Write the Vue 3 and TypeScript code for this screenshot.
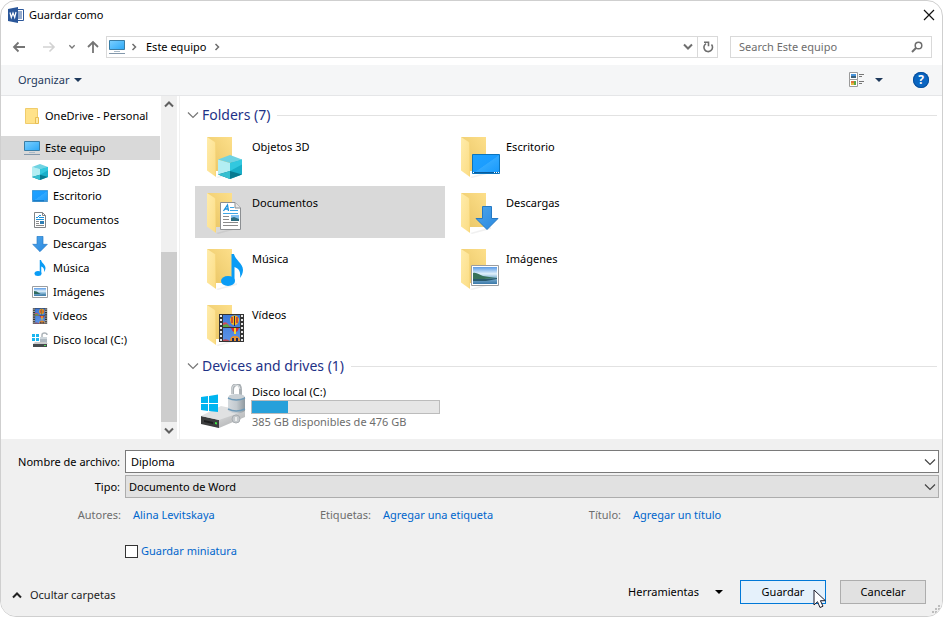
<script setup lang="ts">
import { ref } from 'vue'

interface Place {
  name: string
  icon: string
}

interface FolderTile extends Place {
  x: number
  y: number
  w: number
  h: number
}

const places: Place[] = [
  { name: 'Objetos 3D', icon: 'cube' },
  { name: 'Escritorio', icon: 'desktop' },
  { name: 'Documentos', icon: 'document' },
  { name: 'Descargas', icon: 'download' },
  { name: 'Música', icon: 'music' },
  { name: 'Imágenes', icon: 'picture' },
  { name: 'Vídeos', icon: 'video' },
  { name: 'Disco local (C:)', icon: 'drive' },
]

const folders: FolderTile[] = [
  { name: 'Objetos 3D', icon: 'cube', x: 17, y: 23, w: 24, h: 24 },
  { name: 'Escritorio', icon: 'desktop', x: 17, y: 22, w: 28, h: 20 },
  { name: 'Documentos', icon: 'document', x: 19, y: 14, w: 21, h: 28 },
  { name: 'Descargas', icon: 'download', x: 20, y: 18, w: 24, h: 24 },
  { name: 'Música', icon: 'music', x: 20, y: 10, w: 22, h: 32 },
  { name: 'Imágenes', icon: 'picture', x: 16, y: 21, w: 28, h: 21 },
  { name: 'Vídeos', icon: 'video', x: 18, y: 14, w: 25, h: 28 },
]

const metadata = [
  { label: 'Autores:', action: 'Alina Levitskaya' },
  { label: 'Etiquetas:', action: 'Agregar una etiqueta' },
  { label: 'Título:', action: 'Agregar un título' },
]

const selectedFolder = ref('Documentos')
const fileName = ref('Diploma')
const fileType = ref('Documento de Word')
const saveThumbnail = ref(false)
const totalGb = 476
const freeGb = 385
const usedPercent = Math.round(((totalGb - freeGb) / totalGb) * 100)
</script>

<template>
  <svg class="sprite" width="0" height="0" aria-hidden="true">
    <defs>
      <linearGradient id="g-flap" x1="0" y1="0" x2="1" y2="1">
        <stop offset="0" stop-color="#ffecab" /><stop offset="1" stop-color="#fbdc83" />
      </linearGradient>
      <linearGradient id="g-back" x1="0" y1="1" x2="1" y2="0">
        <stop offset="0" stop-color="#e8c463" /><stop offset="1" stop-color="#fddf8a" />
      </linearGradient>
      <linearGradient id="g-screen" x1="0" y1="0" x2="1" y2="1">
        <stop offset="0" stop-color="#1fa2ff" /><stop offset=".5" stop-color="#1b9dff" />
        <stop offset=".52" stop-color="#31a9ff" /><stop offset="1" stop-color="#1698fb" />
      </linearGradient>
      <linearGradient id="g-pc" x1="0" y1="0" x2="1" y2="1">
        <stop offset="0" stop-color="#7cd0ff" /><stop offset="1" stop-color="#2ba8f7" />
      </linearGradient>
      <linearGradient id="g-arrow" x1="0" y1="0" x2="1" y2="1">
        <stop offset="0" stop-color="#4ea5ea" /><stop offset="1" stop-color="#2888e0" />
      </linearGradient>
      <linearGradient id="g-sky" x1="0" y1="0" x2="0" y2="1">
        <stop offset="0" stop-color="#5a9be6" /><stop offset=".4" stop-color="#e2f1fb" />
        <stop offset=".6" stop-color="#8fbcda" /><stop offset="1" stop-color="#3a78a8" />
      </linearGradient>
      <linearGradient id="g-film" x1="0" y1="0" x2="0" y2="1">
        <stop offset="0" stop-color="#3c78d8" /><stop offset="1" stop-color="#5b93e6" />
      </linearGradient>
      <linearGradient id="g-metal" x1="0" y1="0" x2="1" y2="0">
        <stop offset="0" stop-color="#d5dade" /><stop offset=".5" stop-color="#c3cacf" /><stop offset="1" stop-color="#8f999f" />
      </linearGradient>
      <linearGradient id="g-case" x1="0" y1="0" x2="1" y2="1">
        <stop offset="0" stop-color="#f0f0f0" /><stop offset="1" stop-color="#a9abad" />
      </linearGradient>
    </defs>
    <symbol id="i-folder" viewBox="0 0 48 48">
      <path d="M15 45l21-6v2l-19 5z" fill="#000" opacity=".06" />
      <path d="M6 5h25v34H15z" fill="url(#g-back)" />
      <path d="M6 5l7 4.500q2 1.300 2 3.500v32l-9-6.500z" fill="url(#g-flap)" />
      <path d="M14.500 11v33" stroke="#f7d77c" />
    </symbol>
    <symbol id="i-cube" viewBox="0 0 24 24">
      <path d="M0 4.500L12 8v16L0 19.500z" fill="#b3eef3" />
      <path d="M0 4.500L12 0l12 4.500L12 8z" fill="#6fd3e2" />
      <path d="M12 8l12-3.500v15L12 24z" fill="#19afc9" />
      <path d="M12 8l12-3.500v5L12 16z" fill="#32c8df" />
      <path d="M0 19.500L12 16l12 3.500L12 24z" fill="#087b91" />
      <path d="M0 19.500L12 16v8z" fill="#35bfd0" />
    </symbol>
    <symbol id="i-desktop" viewBox="0 0 28 20">
      <path d="M.5.5h27v19H.5z" fill="url(#g-screen)" stroke="#0b74bd" />
      <path d="M1 18h26v1H1z" fill="#075a9b" />
      <path d="M1 18h1v1H1zM22 18h1v1h-1zM24 18h1v1h-1zM26 18h1v1h-1z" fill="#fff" />
    </symbol>
    <symbol id="i-document" viewBox="0 0 21 28">
      <path d="M.5.5h14.500l5.500 5.500v21.500H.5z" fill="#fff" stroke="#8c8f92" />
      <path d="M15 .5V6h5.500" fill="#e7e7e7" stroke="#8c8f92" />
      <path d="M3.500 9L7.500 3l1 6M5 7h3.500" fill="none" stroke="#1a91dc" stroke-width="1.300" />
      <path d="M10 5.500h4M10 8.500h8M3 11.500h15" stroke="#3ea6e6" />
      <path d="M3 14.500h6M3 17.500h6M3 20.500h15M3 23.500h15" stroke="#8b8b8b" />
      <path d="M11 13h8v6h-8z" fill="#85c2f1" />
      <path d="M11 16l3-1 5 2v2h-8z" fill="#2c6c80" />
    </symbol>
    <symbol id="i-document-small" viewBox="0 0 16 16">
      <path d="M2.500.5h8l3 3v12h-11z" fill="#fff" stroke="#808386" />
      <path d="M10.500.5v3h3" fill="none" stroke="#808386" />
      <path d="M4 5.500h2M7 3.500h2M6 4.500h1M7 5.500h5M4 7.500h8" stroke="#1a91dc" />
      <path d="M4 9.500h3M4 11.500h3M4 13.500h8" stroke="#8b8b8b" />
      <path d="M8 9h4v3H8z" fill="#2f7fb5" />
    </symbol>
    <symbol id="i-download" viewBox="0 0 24 24">
      <path d="M7.500.5h9v12h6.500L12 23.500 1 12.500h6.500z" fill="url(#g-arrow)" stroke="#2479c4" />
    </symbol>
    <symbol id="i-music" viewBox="0 0 22 32">
      <ellipse cx="7" cy="27" rx="7" ry="5" fill="#0a9cf5" />
      <path d="M10.500 0H13c1 6 9 9 9 16 0 3-1.500 6-3 8 1-6-1-9.500-5.500-11v14h-3z" fill="#0a9cf5" />
    </symbol>
    <symbol id="i-picture" viewBox="0 0 28 21">
      <path d="M.5.5h27v20H.5z" fill="#fff" stroke="#9a9da0" />
      <path d="M2 2h24v17H2z" fill="url(#g-sky)" />
      <path d="M2 8c4-1 6 2 10 3s8 1 14 2l-13 1H2z" fill="#387259" />
      <path d="M2 14h13l11-1v1l-11 2H2z" fill="#28596c" />
    </symbol>
    <symbol id="i-picture-small" viewBox="0 0 16 16">
      <path d="M.5 2.500h15v11H.5z" fill="#fff" stroke="#9a9da0" />
      <path d="M2 4h12v8H2z" fill="url(#g-sky)" />
      <path d="M2 7q3 0 5 2t7 1H2z" fill="#2f6b5f" />
    </symbol>
    <symbol id="i-video" viewBox="0 0 25 28">
      <path d="M0 0h25v28H0z" fill="#343434" />
      <path d="M4 1h17v12H4zM4 14h17v13H4z" fill="url(#g-film)" />
      <path d="M2 1v27M23 1v27" stroke="#e8e8e8" stroke-width="2" stroke-dasharray="2 2" />
      <path d="M4 9q3-2 5 1t4 3H4z" fill="#d1495e" />
      <path d="M4 11l4-1 3 3H4z" fill="#58a64b" />
      <path d="M11 6a4.500 4.500 0 0 1 9 0q0 3-3 5h-3q-3-2-3-5z" fill="#f6b71d" />
      <path d="M13 3v6M18 3v6" stroke="#c13236" stroke-width="1.500" />
      <path d="M15.500 2v10" stroke="#282a4d" />
      <path d="M12 14h8q-1 3-3 4h-2q-2-1-3-4z" fill="#d82d31" />
      <path d="M15 14h2v6h-2z" fill="#f7d52b" />
      <path d="M11 27q0-5 5-5t5 5z" fill="#e8902a" />
      <path d="M13 24h2v3h-2zM17 24h2v3h-2z" fill="#212a59" />
      <path d="M4 26q3-2 7 1H4z" fill="#b64a54" />
    </symbol>
    <symbol id="i-drive" viewBox="0 0 16 16">
      <path d="M0 2h3v3H0zM4 2h3v3H4zM0 6h3v3H0zM4 6h3v3H4z" fill="#19b5ef" />
      <path d="M10 6V3q0-2 2.500-2T15 3" fill="none" stroke="#adb4b9" stroke-width="1.500" />
      <path d="M8 5h7v6H8z" fill="#aeb9c1" />
      <path d="M8 6h7" stroke="#ecf2f5" />
      <path d="M3 10h11l2 2H1z" fill="#c9cbcd" />
      <path d="M1 12h14v3H1z" fill="#464a4d" />
      <path d="M12 13h2v1h-2z" fill="#51dd5a" />
    </symbol>
    <symbol id="i-pc" viewBox="0 0 16 16">
      <path d="M.5 1.500h15v9H.5z" fill="url(#g-pc)" stroke="#397da5" />
      <path d="M5 12h6v1H5z" fill="#a9bac8" />
      <path d="M0 14.500h16" stroke="#8398ab" />
    </symbol>
    <symbol id="i-chevron" viewBox="0 0 12 12">
      <path d="M1 3.500l5 5 5-5" fill="none" stroke="currentColor" stroke-width="1.200" />
    </symbol>
    <symbol id="i-chevron-bold" viewBox="0 0 12 12">
      <path d="M2 3.500l4 4 4-4" fill="none" stroke="currentColor" stroke-width="2" />
    </symbol>
    <symbol id="i-chevron-small" viewBox="0 0 8 8">
      <path d="M2.500 1l3 3-3 3" fill="none" stroke="currentColor" stroke-width="1.500" />
    </symbol>
    <symbol id="i-caret" viewBox="0 0 8 8">
      <path d="M0 2h8L4 6z" fill="currentColor" />
    </symbol>
  </svg>

  <main class="dialog">
    <header class="title-bar">
      <svg class="icon-16" viewBox="0 0 16 16" aria-hidden="true">
        <path d="M8.500 2.500h7v11h-7z" fill="#fff" stroke="#2b579a" />
        <path d="M10 5h4M10 7h4M10 9h4M10 11h4" stroke="#2b579a" />
        <path d="M0 2l10-2v16L0 14z" fill="#2b579a" />
        <path d="M2 5.500l1.300 5L5 6l1.700 4.500L8 5" fill="none" stroke="#fff" stroke-width="1.200" />
      </svg>
      <h1>Guardar como</h1>
      <button class="close" aria-label="Cerrar">
        <svg width="12" height="12" viewBox="0 0 12 12"><path d="M1 1l10 10M11 1L1 11" stroke="#111" stroke-width="1.200" /></svg>
      </button>
    </header>

    <div class="address-row">
      <div class="history">
        <button aria-label="Atrás">
          <svg width="14" height="14" viewBox="0 0 14 14"><path d="M13 7H2M6.500 2.500L2 7l4.500 4.500" fill="none" stroke="#757575" stroke-width="1.800" /></svg>
        </button>
        <button aria-label="Adelante" disabled>
          <svg width="14" height="14" viewBox="0 0 14 14"><path d="M1 7h11M7.500 2.500L12 7l-4.500 4.500" fill="none" stroke="#d2d2d2" stroke-width="1.600" /></svg>
        </button>
        <button class="recent" aria-label="Ubicaciones recientes">
          <svg width="8" height="8"><use href="#i-chevron-bold" /></svg>
        </button>
        <button aria-label="Subir">
          <svg width="14" height="14" viewBox="0 0 14 14"><path d="M7 13V2M2 7l5-5 5 5" fill="none" stroke="#757575" stroke-width="1.800" /></svg>
        </button>
      </div>
      <div class="address">
        <svg class="icon-16" aria-hidden="true"><use href="#i-pc" /></svg>
        <svg class="crumb-arrow" width="8" height="8" aria-hidden="true"><use href="#i-chevron-small" /></svg>
        <button class="crumb">Este equipo</button>
        <svg class="crumb-arrow" width="8" height="8" aria-hidden="true"><use href="#i-chevron-small" /></svg>
        <button class="address-drop" aria-label="Ubicaciones anteriores">
          <svg width="12" height="12"><use href="#i-chevron-bold" /></svg>
        </button>
        <button class="refresh" aria-label="Actualizar">
          <svg width="12" height="12" viewBox="0 0 12 12">
            <path d="M9.500 3.500A4.300 4.300 0 1 1 4 2.600" fill="none" stroke="#6e6e6e" stroke-width="1.600" />
            <path d="M2 1.300h4.500v4" fill="none" stroke="#6e6e6e" stroke-width="1.600" />
          </svg>
        </button>
      </div>
      <div class="search">
        <input type="search" placeholder="Search Este equipo" aria-label="Search Este equipo" />
        <svg width="12" height="12" viewBox="0 0 12 12" aria-hidden="true">
          <circle cx="7.500" cy="4.500" r="3.300" fill="none" stroke="#6e6e6e" stroke-width="1.500" />
          <path d="M5 7l-4 4" stroke="#6e6e6e" stroke-width="2" />
        </svg>
      </div>
    </div>

    <div class="toolbar">
      <button class="organize">Organizar <svg width="8" height="8" aria-hidden="true"><use href="#i-caret" /></svg></button>
      <button class="view" aria-label="Cambiar la vista">
        <svg class="icon-16" viewBox="0 0 16 16">
          <path d="M.5.5h8v7h-8zM.5 7.500h8v7h-8z" fill="#fff" stroke="#9a9a9a" />
          <path d="M2 2h5v2H2z" fill="#4793da" /><path d="M2 4h5v2H2z" fill="#3b5f78" />
          <path d="M2 9h3v2H2z" fill="#df763d" /><path d="M5 9h2v4H5z" fill="#5aa846" /><path d="M2 11h3v2H2z" fill="#e4b83a" />
          <path d="M10 2.500h5M10 4.500h3M10 9.500h5M10 11.500h3" stroke="#777" />
        </svg>
        <svg width="8" height="8"><use href="#i-caret" /></svg>
      </button>
      <button class="help" aria-label="Ayuda">?</button>
    </div>

    <div class="browser">
      <nav class="sidebar" aria-label="Ubicaciones">
        <div class="tree">
          <a class="place cloud" href="#onedrive">
            <svg class="icon-16" viewBox="0 0 16 16" aria-hidden="true">
              <path d="M1.500.5h12v15h-12z" fill="#ffe289" stroke="#f0cc6b" />
              <path d="M11.500 9.500h3v6h-3z" fill="#ffe9a6" stroke="#e9be51" />
            </svg>
            OneDrive - Personal
          </a>
          <a class="place current" href="#equipo" aria-current="true">
            <svg class="icon-16" aria-hidden="true"><use href="#i-pc" /></svg>
            Este equipo
          </a>
          <a v-for="place in places" :key="place.name" class="place child" :href="'#' + place.icon">
            <svg class="icon-16" aria-hidden="true">
              <use :href="'#i-' + place.icon + (place.icon === 'document' || place.icon === 'picture' ? '-small' : '')" />
            </svg>
            {{ place.name }}
          </a>
        </div>
        <div class="scrollbar" aria-hidden="true">
          <svg class="flip" width="12" height="12"><use href="#i-chevron-bold" /></svg>
          <div class="track"><div class="thumb"></div></div>
          <svg width="12" height="12"><use href="#i-chevron-bold" /></svg>
        </div>
      </nav>

      <section class="content">
        <h2><svg width="12" height="12" aria-hidden="true"><use href="#i-chevron" /></svg>Folders (7)</h2>
        <div class="tiles">
          <button
            v-for="folder in folders"
            :key="folder.name"
            class="tile"
            :class="{ selected: folder.name === selectedFolder }"
            @click="selectedFolder = folder.name"
          >
            <svg width="48" height="48" viewBox="0 0 48 48" aria-hidden="true">
              <use href="#i-folder" width="48" height="48" />
              <use :href="'#i-' + folder.icon" :x="folder.x" :y="folder.y" :width="folder.w" :height="folder.h" />
            </svg>
            <span class="tile-name">{{ folder.name }}</span>
          </button>
        </div>
        <h2><svg width="12" height="12" aria-hidden="true"><use href="#i-chevron" /></svg>Devices and drives (1)</h2>
        <button class="tile drive">
          <svg width="48" height="48" viewBox="0 0 48 48" aria-hidden="true">
            <path d="M0 33l18-9 26 1v8L18 44 0 39z" fill="url(#g-case)" />
            <path d="M0 32l18 4v8L0 40z" fill="#3c3d3e" />
            <path d="M0 32l18 4 26-9-24-5z" fill="#e0e1e2" />
            <path d="M3 36l9 2v2l-9-2z" fill="#1d1e1f" />
            <path d="M14 38l2 .5v2l-2-.5z" fill="#3bea44" />
            <path d="M0 13l7-1v7H0zM8 12l9-1.500V19H8zM0 20h7v7l-7-1zM8 20h9v8l-9-1z" fill="#00b5f0" />
            <path d="M31.500 10V6q0-5 4-5.500t4 5.500v11" fill="none" stroke="#aab0b4" stroke-width="3" />
            <path d="M31 10V6q0-5 4-5t4 4" fill="none" stroke="#dfe3e5" />
            <path d="M27 13q8-4 17 0v14q-8 5-17 0z" fill="url(#g-metal)" />
            <path d="M27 14q8 4 17 0M27 25q8 4 17 0" fill="none" stroke="#6e9ab8" stroke-width="1.500" />
            <ellipse cx="35.500" cy="12.500" rx="8" ry="2.500" fill="#c9d0d5" />
            <circle cx="35" cy="35" r="4" fill="#c5c9cc" stroke="#a8adb1" />
            <path d="M35 33v4" stroke="#f4f4f4" stroke-width="1.500" />
          </svg>
          <span class="drive-info">
            <span class="drive-name">Disco local (C:)</span>
            <span class="capacity"><span class="used" :style="{ width: usedPercent + '%' }"></span></span>
            <span class="drive-name free">{{ freeGb }} GB disponibles de {{ totalGb }} GB</span>
          </span>
        </button>
      </section>
    </div>

    <form class="details" @submit.prevent>
      <div class="field">
        <label for="file-name">Nombre de archivo:</label>
        <div class="box">
          <input id="file-name" v-model="fileName" type="text" />
          <svg width="12" height="12" aria-hidden="true"><use href="#i-chevron" /></svg>
        </div>
      </div>
      <div class="field">
        <label for="file-type">Tipo:</label>
        <div class="box type">
          <select id="file-type" v-model="fileType">
            <option>Documento de Word</option>
          </select>
          <svg width="12" height="12" aria-hidden="true"><use href="#i-chevron" /></svg>
        </div>
      </div>
      <dl class="metadata">
        <div v-for="item in metadata" :key="item.label">
          <dt>{{ item.label }}</dt>
          <dd><a href="#detalle">{{ item.action }}</a></dd>
        </div>
      </dl>
      <label class="thumbnail"><input v-model="saveThumbnail" type="checkbox" />Guardar miniatura</label>
      <footer>
        <button class="hide-folders" type="button">
          <svg class="flip" width="12" height="12" aria-hidden="true"><use href="#i-chevron-bold" /></svg>Ocultar carpetas
        </button>
        <button class="tools" type="button">Herramientas <svg width="8" height="8" aria-hidden="true"><use href="#i-caret" /></svg></button>
        <button class="action primary" type="submit">
          Guardar
          <svg class="pointer" width="14" height="20" viewBox="0 0 14 20" aria-hidden="true">
            <path d="M1 1v15l3.500-3.300L7 18.500l3-1.300-2.600-5.500h5z" fill="#fff" stroke="#1b1b2b" />
          </svg>
        </button>
        <button class="action" type="button">Cancelar</button>
      </footer>
      <svg class="grip" width="12" height="12" viewBox="0 0 12 12" aria-hidden="true">
        <path d="M8 1h2v2H8zM8 4h2v2H8zM5 4h2v2H5zM5 7h2v2H5zM2 7h2v2H2zM8 7h1v1H8z" fill="#bdbdbd" />
      </svg>
    </form>
  </main>
</template>

<style>
body {
  background: #fff;
}
</style>

<style scoped>
* {
  box-sizing: border-box;
}
.sprite {
  position: absolute;
}
.dialog {
  display: flex;
  flex-direction: column;
  min-height: 100vh;
  overflow: hidden;
  border: 1px solid #cfcfcf;
  border-radius: 16px;
  background: #fff;
  color: #000;
  font: 11px/16px "Noto Sans", "Open Sans", sans-serif;
}
button,
input,
select {
  padding: 0;
  border: 0;
  outline: 0;
  background: none;
  color: inherit;
  font: inherit;
}
a {
  color: inherit;
  text-decoration: none;
}
svg {
  flex: none;
  display: block;
}
.icon-16 {
  width: 16px;
  height: 16px;
}
.flip {
  transform: rotate(180deg);
}
h1,
h2 {
  margin: 0;
  font-size: 11px;
  font-weight: 400;
}
.title-bar {
  display: flex;
  align-items: center;
  gap: 5px;
  height: 28px;
  padding: 0 7px;
}
.close {
  margin-left: auto;
}
.address-row {
  display: flex;
  align-items: center;
  gap: 12px;
  padding: 7px 10px 7px 11px;
}
.history {
  display: flex;
  align-items: center;
  gap: 16px;
  margin-right: -6px;
  color: #777;
}
.recent {
  margin: 0 -6px 0 -4px;
}
.address,
.search {
  display: flex;
  align-items: center;
  height: 22px;
  border: 1px solid #d9d9d9;
}
.address {
  flex: 1;
  padding-left: 2px;
  color: #6e6e6e;
}
.crumb {
  color: #000;
}
.crumb-arrow {
  margin: 0 8px 0 5px;
}
.crumb + .crumb-arrow {
  margin-left: 7px;
}
.address-drop {
  margin: 0 3px 0 auto;
}
.refresh {
  display: grid;
  place-items: center;
  align-self: stretch;
  width: 20px;
  border-left: 1px solid #d9d9d9;
}
.search {
  width: 202px;
  padding: 0 8px;
}
.search input {
  flex: 1;
  min-width: 0;
  appearance: none;
}
.search input::placeholder {
  color: #6d6d6d;
  opacity: 1;
}
.toolbar {
  display: flex;
  align-items: center;
  height: 31px;
  padding: 0 13px 0 17px;
  border-bottom: 1px solid #e5e6e8;
  background: #f5f6f7;
  color: #1e395b;
}
.organize,
.view,
.tools,
.hide-folders {
  display: flex;
  align-items: center;
}
.organize {
  gap: 5px;
}
.view {
  gap: 10px;
  margin: 0 30px 0 auto;
}
.help {
  width: 16px;
  height: 16px;
  border-radius: 50%;
  background: #0a66c2;
  box-shadow: 0 0 0 1px #0a4f9b inset;
  color: #fff;
  font-size: 12px;
  font-weight: 700;
}
.browser {
  display: flex;
  flex: 1;
}
.sidebar {
  display: flex;
  width: 179px;
  padding-right: 2px;
  border-right: 1px solid #f0f0f0;
  white-space: nowrap;
}
.tree {
  flex: 1;
  padding: 8px 1px 0 0;
}
.place {
  display: flex;
  align-items: center;
  gap: 5px;
  height: 24px;
  padding-left: 23px;
}
.cloud {
  margin-bottom: 8px;
}
.current,
.selected {
  background: #d9d9d9;
}
.child {
  padding-left: 31px;
}
.scrollbar {
  display: flex;
  flex-direction: column;
  align-items: center;
  width: 16px;
  padding: 2px 0;
  background: #f0f0f0;
  color: #606060;
}
.track {
  display: flex;
  flex: 1;
  align-items: flex-end;
  align-self: stretch;
  padding: 3px 0;
}
.thumb {
  flex: 1;
  height: 55%;
  background: #cdcdcd;
}
.content {
  flex: 1;
  padding: 4px 5px 0 7px;
}
h2 {
  display: flex;
  align-items: center;
  gap: 3px;
  height: 30px;
  color: #1e3287;
  font-size: 14px;
}
h2 svg {
  color: #777;
}
h2::after {
  content: "";
  flex: 1;
  height: 1px;
  margin-left: 4px;
  background: #e2e2e2;
}
.tiles {
  display: grid;
  grid-template-columns: repeat(auto-fill, 250px);
  gap: 4px;
  max-width: 510px;
  margin: 0 0 1px 8px;
}
.tile {
  display: flex;
  align-items: flex-start;
  gap: 3px;
  width: 250px;
  height: 52px;
  padding: 2px 0 0 6px;
  text-align: left;
}
.tile-name {
  padding-top: 7px;
}
.drive {
  gap: 2px;
  margin-left: 8px;
  padding-top: 3px;
}
.drive-info {
  display: grid;
  flex: 1;
  margin-right: 5px;
}
.drive-name {
  padding-left: 1px;
}
.capacity {
  height: 14px;
  border: 1px solid #bcbcbc;
  background: #e6e6e6;
}
.used {
  display: block;
  height: 100%;
  background: #26a0da;
}
.free {
  color: #6d6d6d;
}
.details {
  position: relative;
  padding: 11px 3px 12px 0;
  background: #f0f0f0;
}
.field {
  display: flex;
  align-items: center;
  margin-bottom: 2px;
}
.field label {
  width: 124px;
  padding-right: 5px;
  text-align: right;
}
.box {
  display: flex;
  flex: 1;
  align-items: center;
  height: 23px;
  padding: 0 2px 0 5px;
  border: 1px solid #7a7a7a;
  background: #fff;
  color: #444;
}
.box.type {
  padding-left: 3px;
  border-color: #adadad;
  background: #e1e1e1;
}
.box input,
.box select {
  flex: 1;
  align-self: stretch;
  min-width: 0;
  appearance: none;
  color: #000;
}
.metadata {
  display: grid;
  grid-template-columns: 250px 250px 1fr;
  margin: 9px 0 20px;
  color: #6d6d6d;
  white-space: nowrap;
}
.metadata div {
  display: flex;
  gap: 12px;
}
.metadata dt {
  width: 120px;
  text-align: right;
}
.metadata dd {
  margin: 0;
}
.metadata a,
.thumbnail {
  color: #0066cc;
}
.thumbnail {
  display: flex;
  align-items: center;
  gap: 3px;
  width: max-content;
  margin-left: 124px;
}
.thumbnail input {
  width: 13px;
  height: 13px;
  margin: 0;
  border: 1px solid #333;
  background: #fff;
  appearance: none;
}
.thumbnail input:checked {
  background: #0078d7;
}
footer {
  display: flex;
  align-items: center;
  gap: 14px;
  margin-top: 21px;
  padding: 0 13px 0 10px;
}
.hide-folders {
  gap: 7px;
  padding-top: 6px;
  color: #222;
}
.tools {
  gap: 16px;
  margin: 0 3px 0 auto;
}
.action {
  width: 86px;
  height: 24px;
  border: 1px solid #adadad;
  background: #e1e1e1;
}
.primary {
  position: relative;
  border-color: #0078d7;
  background: #e5f1fb;
}
.pointer {
  position: absolute;
  top: 8px;
  left: 72px;
}
.grip {
  position: absolute;
  right: 0;
  bottom: 0;
}
</style>
